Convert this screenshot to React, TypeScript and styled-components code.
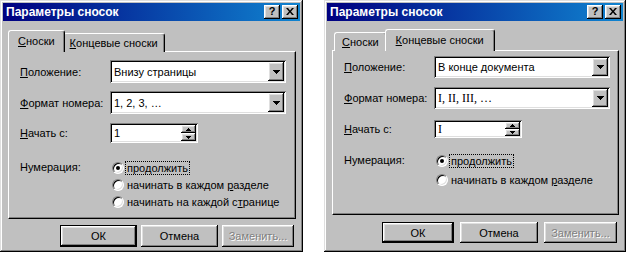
import React from 'react'
import styled, { createGlobalStyle, css } from 'styled-components'

const GlobalStyle = createGlobalStyle`
  html, body {
    margin: 0;
    padding: 0;
    background: #fff;
  }
  body {
    font-family: 'Liberation Sans', Arial, sans-serif;
    font-size: 11px;
    color: #000;
  }
`

type Metrics = {
  tabGap: number
  tabPad: number
  padTop: number
  selH: number
  selGap: number
  spinGap: number
  spinH: number
  radioGap: number
  radioH: number
  panelH: number
  btnGap: number
  btnH: number
  okW: number
  cancelW: number
  replaceW: number
  btnSpace: number
}

const raised = css`
  box-shadow: inset -1px -1px #000, inset 1px 1px #fff, inset -2px -2px #808080, inset 2px 2px #dfdfdf;
`

const sunken = css`
  box-shadow: inset 1px 1px #808080, inset -1px -1px #fff, inset 2px 2px #000, inset -2px -2px #dfdfdf;
`

const Page = styled.div`
  display: flex;
  gap: 21px;
  width: 627px;
  height: 258px;
  overflow: hidden;
`

const Window = styled.div<{ $w: number }>`
  width: ${({ $w }) => $w}px;
  height: 252px;
  box-sizing: border-box;
  padding: 3px;
  background: #c0c0c0;
  box-shadow: inset -1px -1px #000, inset 1px 1px #dfdfdf, inset -2px -2px #808080, inset 2px 2px #fff;
  display: flex;
  flex-direction: column;
`

const TitleBar = styled.div`
  height: 18px;
  flex: none;
  display: flex;
  align-items: center;
  justify-content: space-between;
  padding: 0 2px 0 3px;
  background: linear-gradient(to right, #000080, #1084d0);
  color: #fff;
  font-weight: bold;
  font-size: 12px;
`

const TitleButtons = styled.div`
  display: flex;
  gap: 2px;
`

const TitleButton = styled.div`
  width: 16px;
  height: 14px;
  box-sizing: border-box;
  background: #c0c0c0;
  ${raised};
  color: #000;
  display: flex;
  align-items: center;
  justify-content: center;
  font-weight: bold;
  font-size: 11px;
  line-height: 1;
  padding-bottom: 1px;
`

const Body = styled.div<{ $top: number }>`
  padding: ${({ $top }) => $top}px 4px 0 5px;
  display: flex;
  flex-direction: column;
`

const TabRow = styled.div`
  display: flex;
  align-items: flex-end;
  padding-left: 2px;
  position: relative;
  z-index: 1;
  margin-bottom: -1px;
`

const Tab = styled.div<{ $active?: boolean; $pad: number }>`
  box-sizing: border-box;
  background: #c0c0c0;
  border-top: 1px solid #fff;
  border-left: 1px solid #fff;
  border-right: 1px solid #000;
  border-radius: 3px 3px 0 0;
  box-shadow: inset -1px 0 #808080;
  display: flex;
  align-items: center;
  white-space: nowrap;
  height: ${({ $active }) => ($active ? 22 : 19)}px;
  padding: 0 ${({ $active, $pad }) => ($active ? $pad + 3 : $pad)}px;
  margin: 0 ${({ $active }) => ($active ? -2 : 0)}px;
  ${({ $active }) => $active && 'position: relative; z-index: 2; padding-bottom: 2px;'}
`

const Key = styled.span`
  text-decoration: underline;
  text-underline-offset: 1px;
`

const Panel = styled.div<{ $h: number; $pt: number }>`
  height: ${({ $h }) => $h}px;
  box-sizing: border-box;
  border-top: 1px solid #fff;
  border-left: 1px solid #fff;
  border-right: 1px solid #000;
  border-bottom: 1px solid #000;
  box-shadow: inset -1px -1px #808080;
  padding: ${({ $pt }) => $pt}px 0 0 11px;
  display: flex;
  flex-direction: column;
`

const Row = styled.div<{ $mt: number }>`
  display: flex;
  align-items: center;
  margin-top: ${({ $mt }) => $mt}px;
`

const Label = styled.div<{ $lh?: number }>`
  width: 90px;
  flex: none;
  align-self: ${({ $lh }) => ($lh ? 'flex-start' : 'center')};
  ${({ $lh }) => $lh && `line-height: ${$lh}px;`}
`

const Select = styled.div<{ $h: number }>`
  width: 176px;
  height: ${({ $h }) => $h}px;
  box-sizing: border-box;
  background: #fff;
  ${sunken};
  display: flex;
  align-items: center;
  padding: 2px 2px 2px 4px;
`

const SelectText = styled.div<{ $serif?: boolean }>`
  flex: 1;
  ${({ $serif }) => $serif && `font-family: 'Liberation Serif', 'Times New Roman', serif; font-size: 12px;`}
`

const DropButton = styled.div`
  width: 16px;
  align-self: stretch;
  background: #c0c0c0;
  ${raised};
  display: flex;
  align-items: center;
  justify-content: center;
`

const Spinner = styled(Select)`
  width: 88px;
`

const SpinButtons = styled.div`
  width: 15px;
  align-self: stretch;
  display: flex;
  flex-direction: column;
`

const SpinButton = styled.div`
  flex: 1;
  background: #c0c0c0;
  ${raised};
  display: flex;
  align-items: center;
  justify-content: center;
`

const RadioList = styled.div`
  display: flex;
  flex-direction: column;
`

const RadioRow = styled.div<{ $h: number }>`
  height: ${({ $h }) => $h}px;
  display: flex;
  align-items: center;
  gap: 2px;
`

const RadioCircle = styled.div<{ $on?: boolean }>`
  width: 12px;
  height: 12px;
  box-sizing: border-box;
  border-radius: 50%;
  border: 1px solid;
  border-color: #808080 #fff #fff #808080;
  box-shadow: inset 1px 1px #000, inset -1px -1px #dfdfdf;
  background: #fff;
  display: flex;
  align-items: center;
  justify-content: center;
  margin-left: 2px;
  &::after {
    content: '';
    width: 4px;
    height: 4px;
    border-radius: 50%;
    background: ${({ $on }) => ($on ? '#000' : 'transparent')};
  }
`

const RadioText = styled.span<{ $focus?: boolean }>`
  padding: 0 1px;
  outline: ${({ $focus }) => ($focus ? '1px dotted #000' : 'none')};
`

const ButtonRow = styled.div<{ $mt: number }>`
  display: flex;
  justify-content: flex-end;
  margin-top: ${({ $mt }) => $mt}px;
  padding-right: 2px;
`

const Button = styled.div<{ $w: number; $h: number; $default?: boolean; $disabled?: boolean }>`
  width: ${({ $w }) => $w}px;
  height: ${({ $h }) => $h}px;
  box-sizing: border-box;
  background: #c0c0c0;
  display: flex;
  align-items: center;
  justify-content: center;
  ${({ $default }) =>
    $default
      ? css`
          border: 1px solid #000;
          ${raised};
        `
      : raised};
  color: ${({ $disabled }) => ($disabled ? '#808080' : '#000')};
  text-shadow: ${({ $disabled }) => ($disabled ? '1px 1px #fff' : 'none')};
`

const Gap = styled.div<{ $w: number }>`
  width: ${({ $w }) => $w}px;
`

const DownArrow = () => (
  <svg width="7" height="4" viewBox="0 0 7 4">
    <path d="M0 0h7v1H0zM1 1h5v1H1zM2 2h3v1H2zM3 3h1v1H3z" fill="#000" />
  </svg>
)

const SmallArrow = ({ up }: { up?: boolean }) => (
  <svg width="5" height="3" viewBox="0 0 5 3" style={{ transform: up ? 'rotate(180deg)' : undefined }}>
    <path d="M0 0h5v1H0zM1 1h3v1H1zM2 2h1v1H2z" fill="#000" />
  </svg>
)

const CloseGlyph = () => (
  <svg width="8" height="7" viewBox="0 0 8 7">
    <path d="M0 0h2l2 2.5L6 0h2L5 3.5 8 7H6L4 4.5 2 7H0l3-3.5z" fill="#000" />
  </svg>
)

type DialogProps = {
  width: number
  active: 0 | 1
  position: string
  format: string
  start: string
  serifValues?: boolean
  radios: React.ReactNode[]
  m: Metrics
}

const Dialog = ({ width, active, position, format, start, serifValues, radios, m }: DialogProps) => (
  <Window $w={width}>
    <TitleBar>
      <span>Параметры сносок</span>
      <TitleButtons>
        <TitleButton>?</TitleButton>
        <TitleButton>
          <CloseGlyph />
        </TitleButton>
      </TitleButtons>
    </TitleBar>
    <Body $top={m.tabGap}>
      <TabRow>
        <Tab $active={active === 0} $pad={m.tabPad}>
          <span><Key>С</Key>носки</span>
        </Tab>
        <Tab $active={active === 1} $pad={m.tabPad}>
          <span><Key>К</Key>онцевые сноски</span>
        </Tab>
      </TabRow>
      <Panel $h={m.panelH} $pt={m.padTop}>
        <Row $mt={0}>
          <Label><Key>П</Key>оложение:</Label>
          <Select $h={m.selH}>
            <SelectText>{position}</SelectText>
            <DropButton><DownArrow /></DropButton>
          </Select>
        </Row>
        <Row $mt={m.selGap}>
          <Label><Key>Ф</Key>ормат номера:</Label>
          <Select $h={m.selH}>
            <SelectText $serif={serifValues}>{format}</SelectText>
            <DropButton><DownArrow /></DropButton>
          </Select>
        </Row>
        <Row $mt={m.spinGap}>
          <Label><Key>Н</Key>ачать с:</Label>
          <Spinner $h={m.spinH}>
            <SelectText $serif={serifValues}>{start}</SelectText>
            <SpinButtons>
              <SpinButton><SmallArrow up /></SpinButton>
              <SpinButton><SmallArrow /></SpinButton>
            </SpinButtons>
          </Spinner>
        </Row>
        <Row $mt={m.radioGap}>
          <Label $lh={m.radioH}>Нумерация:</Label>
          <RadioList>
            {radios.map((r, i) => (
              <RadioRow key={i} $h={m.radioH}>
                <RadioCircle $on={i === 0} />
                <RadioText $focus={i === 0}>{r}</RadioText>
              </RadioRow>
            ))}
          </RadioList>
        </Row>
      </Panel>
      <ButtonRow $mt={m.btnGap}>
        <Button $w={m.okW} $h={m.btnH} $default>ОК</Button>
        <Gap $w={m.btnSpace} />
        <Button $w={m.cancelW} $h={m.btnH}>Отмена</Button>
        <Gap $w={m.btnSpace} />
        <Button $w={m.replaceW} $h={m.btnH} $disabled>Заменить...</Button>
      </ButtonRow>
    </Body>
  </Window>
)

const leftMetrics: Metrics = {
  tabGap: 9, tabPad: 6, padTop: 8, selH: 23, selGap: 8, spinGap: 9, spinH: 20,
  radioGap: 16, radioH: 17, panelH: 168, btnGap: 6, btnH: 22,
  okW: 77, cancelW: 77, replaceW: 72, btnSpace: 4,
}

const rightMetrics: Metrics = {
  tabGap: 8, tabPad: 7, padTop: 5, selH: 22, selGap: 9, spinGap: 11, spinH: 18,
  radioGap: 13, radioH: 19, panelH: 165, btnGap: 7, btnH: 21,
  okW: 72, cancelW: 78, replaceW: 73, btnSpace: 6,
}

export default function App() {
  return (
    <>
      <GlobalStyle />
      <Page>
        <Dialog
          width={303}
          active={0}
          position="Внизу страницы"
          format="1, 2, 3, …"
          start="1"
          m={leftMetrics}
          radios={[
            <>про<Key>д</Key>олжить</>,
            <>начинать в каждом <Key>р</Key>азделе</>,
            <>начинать на каждой с<Key>т</Key>ранице</>,
          ]}
        />
        <Dialog
          width={302}
          active={1}
          position="В конце документа"
          format="I, II, III, …"
          start="I"
          serifValues
          m={rightMetrics}
          radios={[
            <>про<Key>д</Key>олжить</>,
            <>начинать в каждом <Key>р</Key>азделе</>,
          ]}
        />
      </Page>
    </>
  )
}
